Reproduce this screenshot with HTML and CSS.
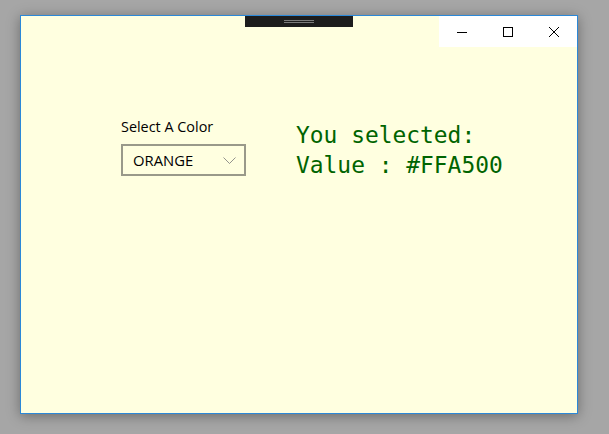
FILE: index.html
```html
<!DOCTYPE html>
<html>
<head>
<meta charset="utf-8">
<link rel="stylesheet" href="styles.css">
</head>
<body>
<div class="window">
  <div class="dragbar"><span class="grip"></span></div>
  <div class="caption">
    <div class="cbtn"><svg width="10" height="10" viewBox="0 0 10 10"><path d="M0 5.5H10" stroke="#000" stroke-width="1"/></svg></div>
    <div class="cbtn"><svg width="10" height="10" viewBox="0 0 10 10"><rect x="0.5" y="0.5" width="9" height="9" fill="none" stroke="#000" stroke-width="1"/></svg></div>
    <div class="cbtn"><svg width="10" height="10" viewBox="0 0 10 10"><path d="M0 0L10 10M10 0L0 10" stroke="#000" stroke-width="1"/></svg></div>
  </div>
  <div class="content">
    <div class="picker">
      <div class="label">Select A Color</div>
      <div class="select">
        <span class="value">ORANGE</span>
        <svg class="chev" width="13" height="7" viewBox="0 0 13 7"><path d="M0.5 0.5L6.5 6.5L12.5 0.5" fill="none" stroke="#777" stroke-width="0.8"/></svg>
      </div>
    </div>
    <div class="result">
      <div>You selected:</div>
      <div>Value : #FFA500</div>
    </div>
  </div>
</div>
</body>
</html>
```
FILE: styles.css
```css
html, body {
  margin: 0;
  padding: 0;
  background: #a6a6a6;
  width: 609px;
  height: 434px;
  overflow: hidden;
}
.window {
  position: relative;
  margin: 15px 0 0 20px;
  width: 556px;
  height: 397px;
  border: 1px solid #2b88d8;
  background: #ffffe0;
  box-shadow: 0 2px 12px rgba(0,0,0,0.35);
}
.dragbar {
  position: absolute;
  left: 224px;
  top: 0;
  width: 108px;
  height: 11px;
  background: #1c1c1c;
  display: flex;
  justify-content: center;
  align-items: flex-start;
}
.grip {
  margin-top: 4px;
  width: 30px;
  height: 1px;
  border-top: 1px solid #7a7a7a;
  border-bottom: 1px solid #7a7a7a;
}
.caption {
  position: absolute;
  right: 0;
  top: 0;
  display: flex;
  background: #ffffff;
}
.cbtn {
  width: 46px;
  height: 31px;
  display: flex;
  align-items: center;
  justify-content: center;
}
.cbtn svg { display: block; margin-top: 1px; }
.content {
  display: flex;
  padding: 101px 0 0 100px;
  gap: 50px;
  font-family: "Open Sans", "Noto Sans", sans-serif;
}
.label {
  font-size: 14.4px;
  line-height: 20px;
  color: #000;
  margin-bottom: 7px;
}
.select {
  width: 121px;
  height: 28px;
  border: 2px solid #99998a;
  display: flex;
  align-items: center;
  justify-content: space-between;
  box-sizing: content-box;
}
.value {
  margin-left: 10px;
  font-size: 14.8px;
  color: #000;
}
.chev { margin-right: 8px; margin-top: 1px; }
.result {
  font-family: "DejaVu Sans Mono", "Liberation Mono", monospace;
  font-size: 22.9px;
  line-height: 30px;
  color: #006400;
  padding-top: 3px;
}
```
